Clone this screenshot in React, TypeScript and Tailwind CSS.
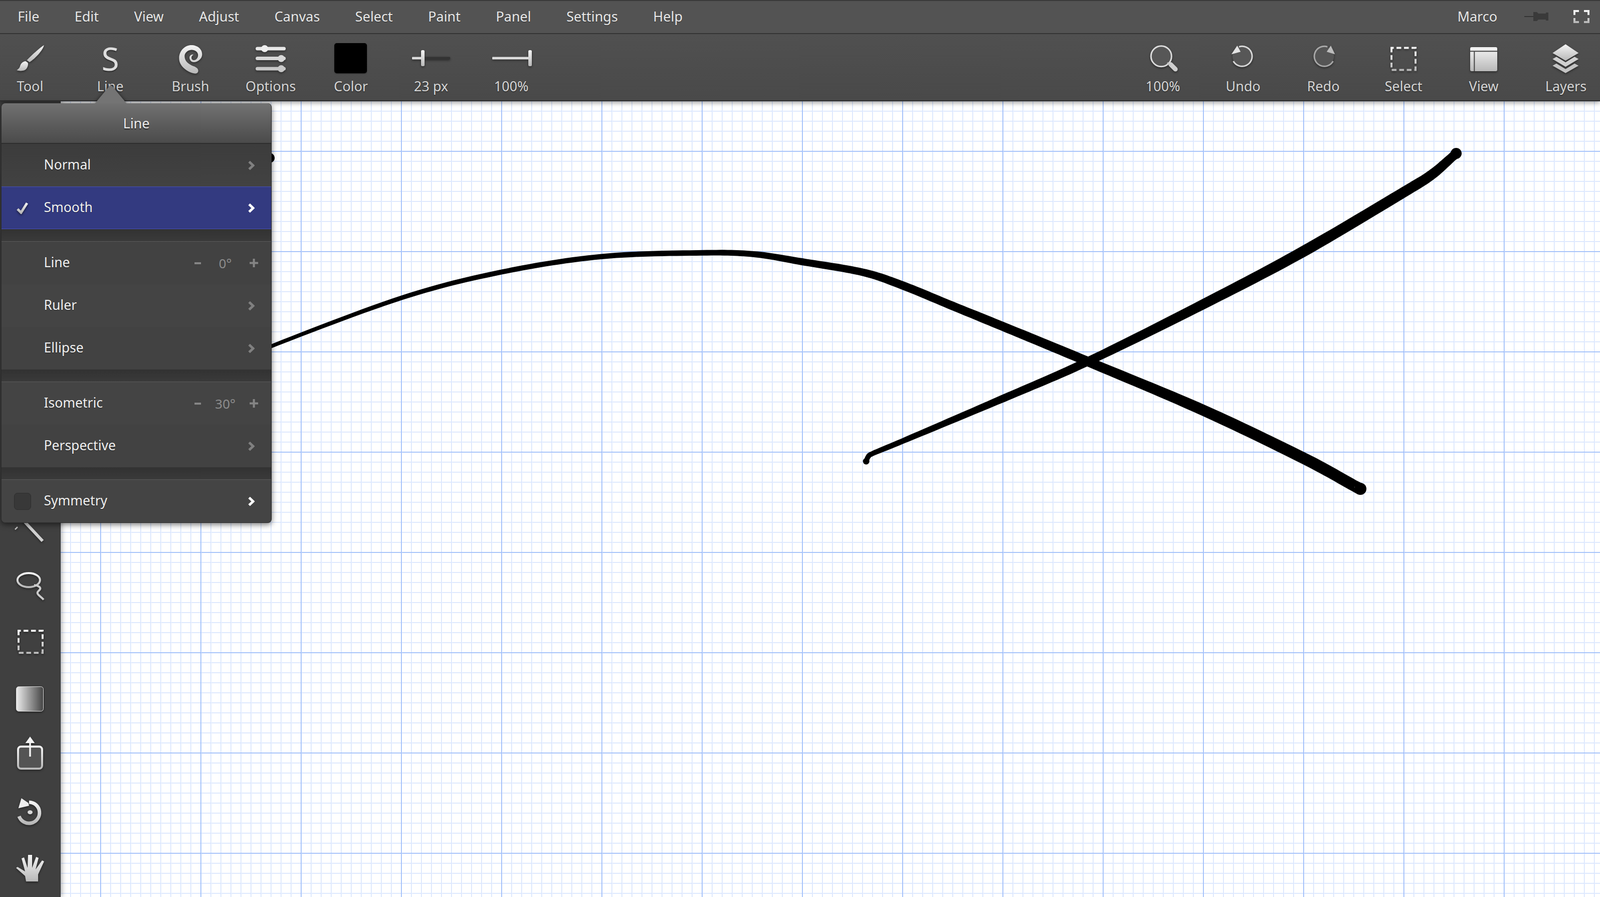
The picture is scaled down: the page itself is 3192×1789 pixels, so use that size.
import type { ReactNode } from 'react';

type Pt = [number, number, number];

// turns a centre line with widths into a filled brush stroke
function brushPath(pts: Pt[]) {
  const left: string[] = [];
  const right: string[] = [];
  for (let i = 0; i < pts.length - 1; i++) {
    const p0 = pts[Math.max(i - 1, 0)];
    const p1 = pts[i];
    const p2 = pts[i + 1];
    const p3 = pts[Math.min(i + 2, pts.length - 1)];
    for (let s = 0; s < 14; s++) {
      const t = s / 14;
      const cr = (a: number, b: number, c: number, d: number) =>
        0.5 * (2 * b + (c - a) * t + (2 * a - 5 * b + 4 * c - d) * t * t + (3 * b - a - 3 * c + d) * t * t * t);
      const tan = (a: number, b: number, c: number, d: number) =>
        0.5 * (c - a + 2 * (2 * a - 5 * b + 4 * c - d) * t + 3 * (3 * b - a - 3 * c + d) * t * t);
      const x = cr(p0[0], p1[0], p2[0], p3[0]);
      const y = cr(p0[1], p1[1], p2[1], p3[1]);
      const dx = tan(p0[0], p1[0], p2[0], p3[0]);
      const dy = tan(p0[1], p1[1], p2[1], p3[1]);
      const len = Math.hypot(dx, dy) || 1;
      const w = (p1[2] + (p2[2] - p1[2]) * t) / 2;
      left.push(`${(x - (dy / len) * w).toFixed(1)} ${(y + (dx / len) * w).toFixed(1)}`);
      right.unshift(`${(x + (dy / len) * w).toFixed(1)} ${(y - (dx / len) * w).toFixed(1)}`);
    }
  }
  return `M${left.join('L')}L${right.join('L')}Z`;
}

const strokeOne: Pt[] = [
  [500, 713, 7], [540, 691, 7.5], [801, 594, 9], [1000, 542.7, 10], [1200, 511.7, 10.5], [1400, 504.3, 11],
  [1504, 507, 12], [1600, 522, 14], [1721, 543, 15], [1800, 569, 16.5], [1900, 610, 17], [2000.6, 651, 18],
  [2170, 721, 19], [2400, 818, 22], [2601, 914, 23], [2700, 968, 23], [2714, 975, 24],
];

const strokeTwo: Pt[] = [
  [1728, 921, 10], [1732, 911, 10], [1742, 904, 10], [1800, 880, 11], [2000.6, 795, 15], [2170, 721, 17],
  [2400, 607, 20], [2600, 501.6, 22], [2801, 383, 21], [2856, 348.5, 20], [2895, 315, 18], [2906, 305, 19],
];

function Icon({ children }: { children: ReactNode }) {
  return (
    <svg viewBox="0 0 80 68" className="h-[68px] w-[80px] overflow-visible drop-shadow-[0_2px_2px_rgba(0,0,0,0.45)]">
      {children}
    </svg>
  );
}

const M = 'url(#metal)';

const BrushTool = () => (
  <Icon>
    <path fill={M} d="M67.7 6C60 11 45 24 33.5 36L39 40C50 33 66 16 67.7 6Z" />
    <path fill={M} d="M31 38C24 39 21 44 20 48C19 52 16 54 13.3 56C20 58.5 30 58 33.5 52C36 48 36.5 44 35.5 41Z" />
  </Icon>
);

const LineGlyph = () => (
  <span className="flex h-[68px] w-[80px] items-center justify-center pb-[2px] text-[64px] font-normal leading-[68px] text-[#dedede] [text-shadow:0_2px_2px_rgba(0,0,0,0.45)]">
    S
  </span>
);

const Spiral = () => (
  <Icon>
    <path
      fill={M}
      d="M50 62.7C38 62 17 50 17.3 32C17.5 16 30 6 41.7 6C54 6 63.3 14 63.3 24.3C63.3 33 55 40 46.7 40C41 40 38 35 38 31C38 27 42 24 46 25C44 26 42 28 42 31C42 34 44 36 47 36C52 36 56 30 55 24.3C54 19 48 15 41.7 15.5C34 16 28.3 22 28.3 28C28.3 38 36 44 46 48C50 49.5 55.5 52 55.5 57C55.5 60.5 53 62.7 50 62.7Z"
    />
  </Icon>
);

const Options = () => (
  <Icon>
    <rect x="10" y="9.5" width="60" height="7" rx="3.5" fill="#e8e8e8" />
    <circle cx="28" cy="13" r="7" fill="#eeeeee" />
    <rect x="10" y="29" width="60" height="7" rx="3.5" fill="#d8d8d8" />
    <circle cx="61" cy="32.7" r="7" fill="#d8d8d8" />
    <rect x="10" y="49.5" width="60" height="7" rx="3.5" fill="#c8c8c8" />
    <circle cx="61" cy="53" r="7" fill="#c8c8c8" />
  </Icon>
);

const ColorSwatch = () => (
  <span className="flex h-[68px] w-[80px] items-center justify-center pb-[4px] pr-[1px]">
    <span className="h-[60px] w-[65px] rounded-[5px] bg-black shadow-[0_1px_2px_rgba(0,0,0,0.5)]" />
  </span>
);

const SizeSlider = () => (
  <Icon>
    <rect x="2" y="29.5" width="76" height="5" rx="1" fill="#333333" />
    <rect x="2" y="29.5" width="21" height="5" rx="1" fill="#dddddd" />
    <rect x="20" y="16" width="7" height="32" rx="2.5" fill={M} />
  </Icon>
);

const OpacitySlider = () => (
  <Icon>
    <rect x="2" y="29.5" width="76" height="5" rx="1" fill="#dddddd" />
    <rect x="74" y="16" width="7" height="32" rx="2.5" fill={M} />
  </Icon>
);

const Zoom = () => (
  <Icon>
    <circle cx="36.7" cy="28.3" r="20.5" fill="#575757" stroke="#dcdcdc" strokeWidth="3" />
    <path d="M55.5 44.5L65 54" stroke="#d0d0d0" strokeWidth="9" strokeLinecap="round" />
    <path d="M49 41L55 47" stroke="#c4c4c4" strokeWidth="3" />
  </Icon>
);

const Undo = () => (
  <Icon>
    <circle cx="38.3" cy="28.3" r="19.5" fill="#575757" />
    <path d="M31.7 9.3A20 20 0 1 1 20.5 38" fill="none" stroke="#d8d8d8" strokeWidth="3" />
    <path d="M16.7 24.3L28.3 7L35 19.3Z" fill="#e4e4e4" />
  </Icon>
);

const Redo = () => (
  <Icon>
    <circle cx="41.7" cy="28.3" r="19.5" fill="#555555" />
    <path d="M48.3 9.3A20 20 0 1 0 59.5 38" fill="none" stroke="#a8a8a8" strokeWidth="3" />
    <path d="M63.3 24.3L55 7L46.7 19.3Z" fill="#bcbcbc" />
  </Icon>
);

const SelectRect = () => (
  <Icon>
    <rect x="16" y="11.5" width="48" height="44" fill="none" stroke={M} strokeWidth="4" strokeDasharray="9.5 5.5" strokeDashoffset="5" />
  </Icon>
);

const ViewPanel = () => (
  <Icon>
    <rect x="13" y="10" width="54" height="48" rx="3" fill={M} />
    <path d="M13 18.3H67M21.3 18.3V58" stroke="#474747" strokeWidth="2" />
  </Icon>
);

const Layers = () => (
  <Icon>
    <path d="M39.3 4.3L65.3 21.7L39.3 37L13.3 21.7Z" fill={M} />
    <path d="M13.3 33.7L21 29.3L39.3 40.3L57.3 29.3L65.3 33.7L39.3 49.3Z" fill="#d0d0d0" />
    <path d="M13.3 47L21 42.7L39.3 53.7L57.3 42.7L65.3 47L39.3 61.7Z" fill="#c4c4c4" />
  </Icon>
);

const LineTool = () => (
  <Icon>
    <path d="M22 17L65 63" stroke="#d0d0d0" strokeWidth="6" />
    <path d="M10 40L15 35" stroke="#c4c4c4" strokeWidth="2.5" />
  </Icon>
);

const Lasso = () => (
  <Icon>
    <ellipse cx="37.3" cy="27" rx="22.5" ry="14" fill="none" stroke={M} strokeWidth="4" />
    <path d="M48 37C54 37 62 41 60 45C58 49 53 50 55 54C57 58 63 61 67 66" fill="none" stroke="#cccccc" strokeWidth="4" />
  </Icon>
);

const SideSelect = () => (
  <Icon>
    <rect x="17" y="15" width="48" height="44" fill="none" stroke={M} strokeWidth="4" strokeDasharray="9.5 5.5" strokeDashoffset="5" />
  </Icon>
);

const GradientFill = () => (
  <Icon>
    <rect x="12.5" y="12.5" width="54" height="49" rx="5" fill="url(#fade)" stroke="#dddddd" strokeWidth="1" />
  </Icon>
);

const Share = () => (
  <Icon>
    <rect x="16" y="18" width="48" height="44" rx="6" fill="#545454" stroke={M} strokeWidth="4" />
    <path d="M40 38V8" stroke="#f2f2f2" strokeWidth="3.5" />
    <path d="M30.7 11L40 -2L49.3 11Z" fill="#f4f4f4" />
  </Icon>
);

const Rotate = () => (
  <Icon>
    <path d="M38 16A21 21 0 1 1 18 44" fill="none" stroke={M} strokeWidth="7" />
    <path d="M16.7 28L22.7 8L36.7 17.5L38 23Z" fill="#eeeeee" />
    <ellipse cx="40" cy="36" rx="5" ry="4" fill="#d8d8d8" />
  </Icon>
);

const Hand = () => (
  <Icon>
    <path
      fill={M}
      d="M32 60L30 49L12 33L15 31L30 40L23 14L28 12L35 33L36 7L44 7L44 33L52 11L57 13L51 36L64 18L68 20L56 46L56 60Z"
    />
  </Icon>
);

const menus = ['File', 'Edit', 'View', 'Adjust', 'Canvas', 'Select', 'Paint', 'Panel', 'Settings', 'Help'];

const leftTools = [
  { label: 'Tool', icon: <BrushTool /> },
  { label: 'Line', icon: <LineGlyph /> },
  { label: 'Brush', icon: <Spiral /> },
  { label: 'Options', icon: <Options /> },
  { label: 'Color', icon: <ColorSwatch /> },
  { label: '23 px', icon: <SizeSlider /> },
  { label: '100%', icon: <OpacitySlider /> },
];

const rightTools = [
  { label: '100%', icon: <Zoom /> },
  { label: 'Undo', icon: <Undo /> },
  { label: 'Redo', icon: <Redo /> },
  { label: 'Select', icon: <SelectRect /> },
  { label: 'View', icon: <ViewPanel /> },
];

function ToolButton({ label, icon, className = '' }: { label: string; icon: ReactNode; className?: string }) {
  return (
    <div className={`flex w-[160px] flex-col items-center pt-[16px] ${className}`}>
      {icon}
      <span className="mt-[2px] text-[27px] leading-[36px] text-[#d6d6d6] [text-shadow:0_1px_2px_rgba(0,0,0,0.6)]">{label}</span>
    </div>
  );
}

function Chevron({ bright }: { bright?: boolean }) {
  return (
    <svg viewBox="0 0 13 18" className="h-[18px] w-[13px]">
      <path d="M2 1.5L10 9L2 16.5" fill="none" stroke={bright ? '#ffffff' : '#808080'} strokeWidth="5" />
    </svg>
  );
}

function Stepper({ value }: { value: string }) {
  return (
    <div className="mr-[-7px] flex w-[127px] items-center justify-between text-[#8c8c8c]">
      <span className="h-[4px] w-[13px] bg-[#858585]" />
      <span className="text-[26px] leading-none">{value}</span>
      <svg viewBox="0 0 17 17" className="h-[17px] w-[17px]">
        <path d="M8.5 0V17M0 8.5H17" stroke="#858585" strokeWidth="4" />
      </svg>
    </div>
  );
}

function MenuRow({
  label,
  lead,
  active,
  bright,
  stepper,
  tint = 'bg-[#424242]',
}: {
  label: string;
  lead?: ReactNode;
  active?: boolean;
  bright?: boolean;
  stepper?: string;
  tint?: string;
}) {
  return (
    <div
      className={`flex h-[85px] items-center pr-[33px] ${
        active ? 'border-y border-[#4650b8] bg-[#333a80]' : tint
      }`}
    >
      <div className="flex w-[84.5px] shrink-0 justify-center">{lead}</div>
      <span className="pb-[1px] text-[26.5px] text-[#f0f0f0] [text-shadow:0_1px_1px_rgba(0,0,0,0.5)]">{label}</span>
      <div className="ml-auto flex items-center">{stepper ? <Stepper value={stepper} /> : <Chevron bright={bright} />}</div>
    </div>
  );
}

const MenuGap = () => <div className="h-[25px] border-b border-[#5a5a5a] bg-gradient-to-b from-[#323232] to-[#3a3a3a]" />;

function LineMenu() {
  return (
    <div className="absolute left-[2px] top-[206px] z-30 w-[540px] rounded-[8px] border-x border-b border-[#2c2c2c] bg-[#424242] shadow-[0_3px_12px_rgba(0,0,0,0.55)]">
      <svg viewBox="0 0 84 40" className="absolute left-[176px] top-[-37px] h-[40px] w-[84px] drop-shadow-[0_-1px_3px_rgba(0,0,0,0.5)]">
        <path d="M6 38C10 38 12 36 14 33L39 3Q42 0 45 3L70 33C72 36 74 38 78 38Z" fill="#747474" />
      </svg>
      <div className="relative flex h-[81px] items-center justify-center rounded-t-[8px] border-b-2 border-[#2e2e2e] bg-gradient-to-b from-[#727272] to-[#4b4b4b] pt-[2px] text-[27px] text-[#ececec] [text-shadow:0_2px_2px_rgba(0,0,0,0.6)]">
        Line
      </div>
      <MenuRow label="Normal" tint="bg-gradient-to-b from-[#3c3c3c] to-[#424242]" />
      <MenuRow
        label="Smooth"
        active
        bright
        lead={
          <svg viewBox="0 0 24 24" className="h-[24px] w-[24px] drop-shadow-[0_2px_2px_rgba(0,0,0,0.6)]">
            <path d="M2 14L9 21L21 2" fill="none" stroke={M} strokeWidth="5" />
          </svg>
        }
      />
      <MenuGap />
      <MenuRow label="Line" stepper="0°" tint="bg-[#424242]" />
      <MenuRow label="Ruler" tint="bg-[#444444]" />
      <MenuRow label="Ellipse" tint="bg-[#424242]" />
      <MenuGap />
      <MenuRow label="Isometric" stepper="30°" tint="bg-[#444444]" />
      <MenuRow label="Perspective" tint="bg-[#424242]" />
      <MenuGap />
      <div className="overflow-hidden rounded-b-[8px]">
        <MenuRow
          label="Symmetry"
          bright
          tint="bg-[#444444]"
          lead={<span className="h-[34px] w-[34px] rounded-[7px] border border-[#2e2e2e] bg-[#383838]" />}
        />
      </div>
    </div>
  );
}

export default function App() {
  return (
    <div className="relative flex h-screen w-screen flex-col overflow-hidden bg-white font-['Open_Sans',sans-serif]">
      <svg className="absolute h-0 w-0">
        <defs>
          <linearGradient id="metal" x1="0" y1="0" x2="0" y2="1">
            <stop offset="0" stopColor="#f4f4f4" />
            <stop offset="1" stopColor="#b8b8b8" />
          </linearGradient>
          <linearGradient id="fade" x1="0" y1="0" x2="1" y2="0">
            <stop offset="0" stopColor="#ececec" />
            <stop offset="1" stopColor="#444444" />
          </linearGradient>
        </defs>
      </svg>

      <header className="relative z-20 shrink-0 shadow-[0_2px_10px_rgba(0,0,0,0.45)]">
        <div className="flex h-[68px] items-center border-t-2 border-b-2 border-t-[#3a3a3a] border-b-[#343434] bg-[#535353] pb-[2px] text-[27px] text-[#e8e8e8] [text-shadow:0_1px_1px_rgba(0,0,0,0.5)]">
          {menus.map((m) => (
            <span key={m} className="px-[35.2px]">
              {m}
            </span>
          ))}
          <div className="ml-auto flex items-center pr-[21px]">
            <span>Marco</span>
            <svg viewBox="0 0 48 24" className="ml-[54px] h-[24px] w-[48px]">
              <path d="M0 11H19V13H0Z" fill="#353535" />
              <path d="M18 3H25L28 6H43V4H48V20H43V18H28L25 21H18Z" fill="#3a3a3a" />
            </svg>
            <svg viewBox="0 0 32 26" className="ml-[50px] h-[26px] w-[32px]">
              <path d="M2 10V2H11M21 2H30V10M30 16V24H21M11 24H2V16" fill="none" stroke={M} strokeWidth="4" />
            </svg>
          </div>
        </div>
        <div className="flex h-[134px] items-start justify-between overflow-hidden border-b-2 border-[#2e2e2e] bg-gradient-to-b from-[#505050] to-[#494949]">
          <div className="ml-[-20px] flex">
            {leftTools.map((t) => (
              <ToolButton key={t.label} {...t} />
            ))}
          </div>
          <div className="mr-[-12px] flex">
            {rightTools.map((t) => (
              <ToolButton key={t.label} {...t} />
            ))}
            <ToolButton label="Layers" icon={<Layers />} className="ml-[4px]" />
          </div>
        </div>
      </header>

      <div className="flex min-h-0 flex-1">
        <aside className="relative z-10 flex w-[121px] shrink-0 flex-col items-center justify-end border-r border-[#333333] bg-[#404040] shadow-[2px_0_10px_rgba(0,0,0,0.35)]">
          {[<LineTool />, <Lasso />, <SideSelect />, <GradientFill />, <Share />, <Rotate />, <Hand />].map((icon, i) => (
            <div key={i} className="flex h-[113.7px] items-center justify-center">
              {icon}
            </div>
          ))}
        </aside>
        <main className="relative min-w-0 flex-1 bg-white bg-[image:linear-gradient(to_right,#8ab0f8_1px,#c8dafc_1px,#c8dafc_2px,transparent_2px),linear-gradient(to_bottom,#8ab0f8_1px,#c8dafc_1px,#c8dafc_2px,transparent_2px),linear-gradient(to_right,#d0e0fd_1px,#eef3fe_1px,#eef3fe_2px,transparent_2px),linear-gradient(to_bottom,#d0e0fd_1px,#eef3fe_1px,#eef3fe_2px,transparent_2px)] bg-[size:200px_100%,100%_200px,20px_100%,100%_20px] bg-[position:79px_0,0_99px,19px_0,0_19px]">
          <svg viewBox="121 202 3071 1587" className="absolute inset-0 h-full w-full">
            <path d={brushPath(strokeOne)} fill="#000000" />
            <path d={brushPath(strokeTwo)} fill="#000000" />
            <circle cx="538" cy="315" r="10" fill="#000000" />
            <circle cx="2714" cy="975" r="12" fill="#000000" />
            <circle cx="2905" cy="306" r="11" fill="#000000" />
            <circle cx="1728" cy="920" r="6.5" fill="#000000" />
          </svg>
        </main>
      </div>

      <LineMenu />
    </div>
  );
}
